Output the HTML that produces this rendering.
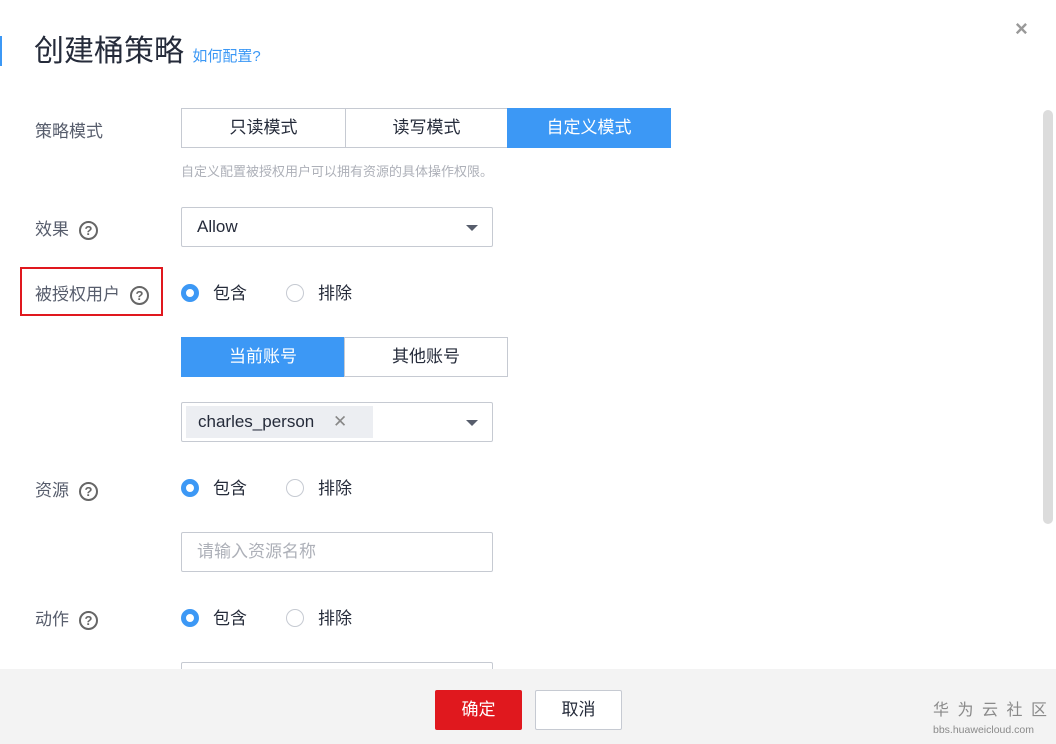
<!DOCTYPE html>
<html><head><meta charset="utf-8"><style>
*{box-sizing:border-box;margin:0;padding:0}
body{width:1056px;height:744px;position:relative;overflow:hidden;background:#fff;font-family:"Liberation Sans","Noto Sans CJK SC",sans-serif;color:#252b3a}
.a{position:absolute}
.lbl{position:absolute;left:35px;font-size:17px;color:#575d6c}
.q{display:inline-block;width:19px;height:19px;border:2px solid #666;border-radius:50%;font-size:13px;font-weight:bold;color:#666;text-align:center;line-height:15px;vertical-align:middle;margin-left:10px}
.seg{position:absolute;height:40px;border:1px solid #c6cad2;font-size:17px;text-align:center;line-height:38px;color:#252b3a}
.on{background:#3c98f5;border-color:#3c98f5;color:#fff}
.inp{position:absolute;left:181px;width:312px;height:40px;border:1px solid #c6cad2;border-radius:2px;font-size:17px;line-height:38px;padding-left:15px}
.radio{position:absolute;font-size:17px;color:#252b3a}
.r{display:inline-block;width:18px;height:18px;border-radius:50%;border:1px solid #c6cad2;vertical-align:-3px;margin-right:14px}
.r.s{border:5px solid #3c98f5}
.arr{position:absolute;right:14px;top:17px;border-left:6px solid transparent;border-right:6px solid transparent;border-top:6px solid #575d6c}
</style></head><body>
<div class="a" style="left:0;top:36px;width:2px;height:30px;background:#3c98f5"></div>
<div class="a" style="left:34px;top:26px;font-size:30px;color:#252b3a">创建桶策略 <span style="font-size:15px;color:#3c98f5">如何配置?</span></div>
<div class="a" style="left:1015px;top:16px;font-size:22px;color:#999;font-weight:bold">×</div>
<div class="a" style="left:1043px;top:110px;width:10px;height:414px;border-radius:5px;background:#dcdcdc"></div>

<div class="lbl" style="top:117px">策略模式</div>
<div class="seg" style="left:181px;top:108px;width:165px">只读模式</div>
<div class="seg" style="left:345px;top:108px;width:163px">读写模式</div>
<div class="seg on" style="left:507px;top:108px;width:164px">自定义模式</div>
<div class="a" style="left:181px;top:161px;font-size:13px;color:#adb0b8">自定义配置被授权用户可以拥有资源的具体操作权限。</div>

<div class="lbl" style="top:215px">效果<span class="q">?</span></div>
<div class="inp" style="top:207px">Allow<div class="arr"></div></div>

<div class="a" style="left:20px;top:267px;width:143px;height:49px;border:2px solid #e0181e"></div>
<div class="lbl" style="top:280px">被授权用户<span class="q">?</span></div>
<div class="radio" style="left:181px;top:279px"><span class="r s"></span>包含</div>
<div class="radio" style="left:286px;top:279px"><span class="r"></span>排除</div>

<div class="seg on" style="left:181px;top:337px;width:164px">当前账号</div>
<div class="seg" style="left:344px;top:337px;width:164px">其他账号</div>

<div class="inp" style="top:402px;padding-left:4px"><span style="display:inline-block;background:#eceef2;height:32px;line-height:32px;margin-top:2px;padding:0 14px 0 12px;width:187px">charles_person <span style="color:#888;margin-left:14px">✕</span></span><div class="arr"></div></div>

<div class="lbl" style="top:476px">资源<span class="q">?</span></div>
<div class="radio" style="left:181px;top:474px"><span class="r s"></span>包含</div>
<div class="radio" style="left:286px;top:474px"><span class="r"></span>排除</div>
<div class="inp" style="top:532px;color:#adb0b8">请输入资源名称</div>

<div class="lbl" style="top:605px">动作<span class="q">?</span></div>
<div class="radio" style="left:181px;top:604px"><span class="r s"></span>包含</div>
<div class="radio" style="left:286px;top:604px"><span class="r"></span>排除</div>
<div class="inp" style="top:662px;height:30px"></div>

<div class="a" style="left:0;top:669px;width:1056px;height:75px;background:#f3f3f3"></div>
<div class="a" style="left:435px;top:690px;width:87px;height:40px;background:#e0181e;color:#fff;font-size:17px;text-align:center;line-height:40px;border-radius:2px">确定</div>
<div class="a" style="left:535px;top:690px;width:87px;height:40px;background:#fff;border:1px solid #c6cad2;font-size:17px;text-align:center;line-height:38px;border-radius:2px">取消</div>
<div class="a" style="left:933px;top:702px;font-size:16px;line-height:18px;color:#8a8a8a;letter-spacing:8.5px">华为云社区</div>
<div class="a" style="left:933px;top:724px;font-size:10.5px;line-height:12px;color:#8a8a8a">bbs.huaweicloud.com</div>
</body></html>
